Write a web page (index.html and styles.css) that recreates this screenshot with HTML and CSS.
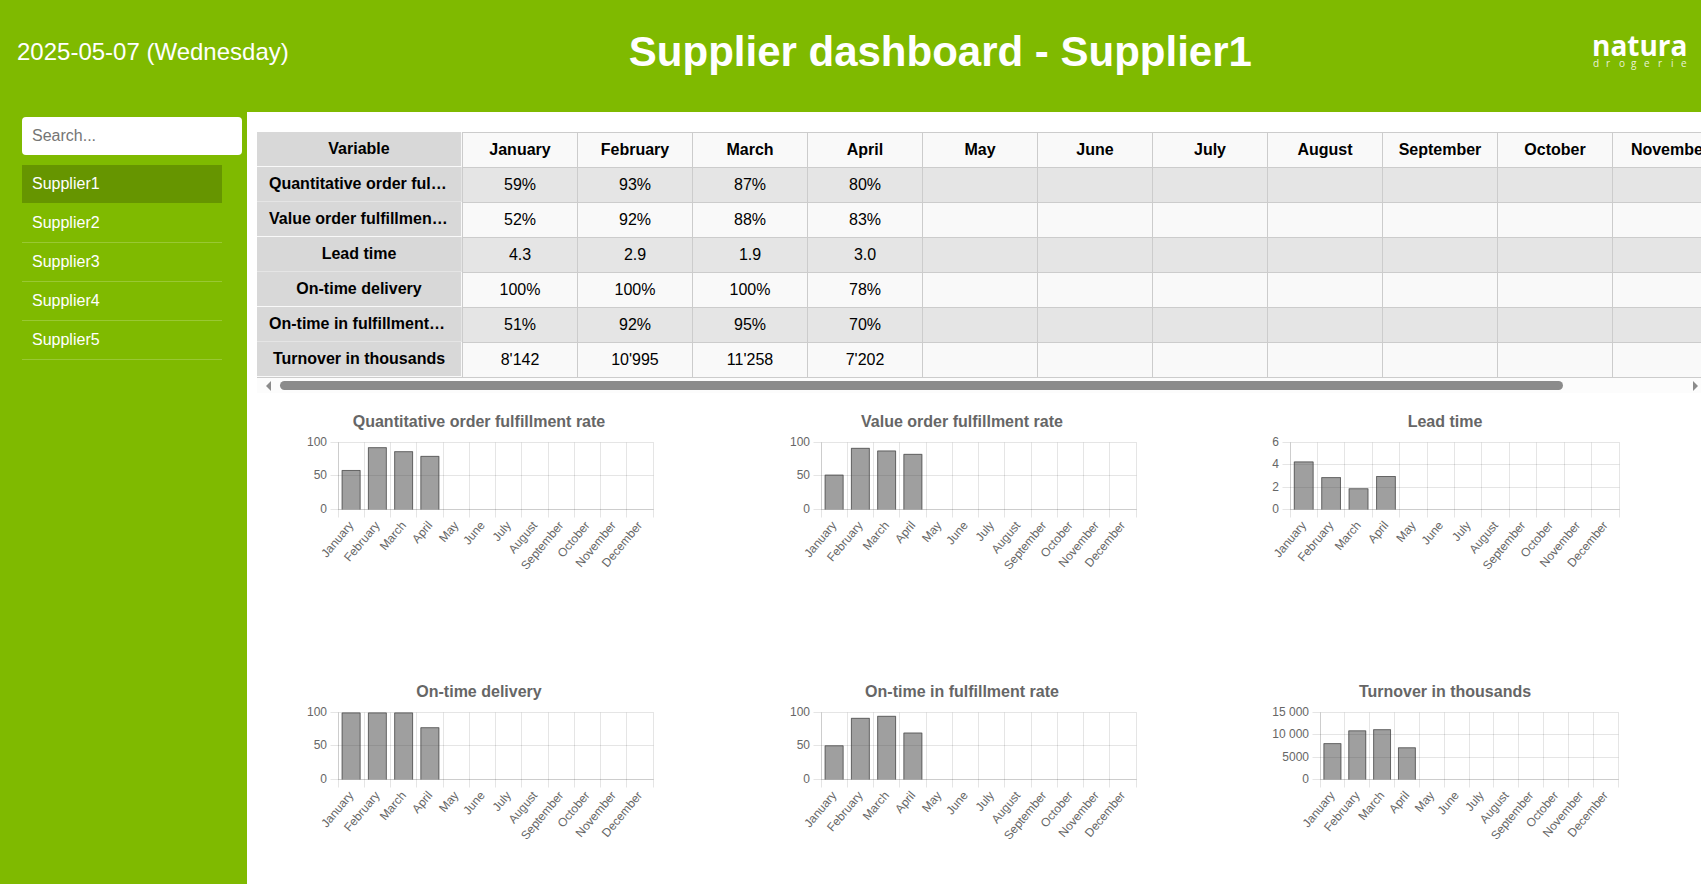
FILE: index.html
```html
<!DOCTYPE html>
<html lang="en">
<head>
<meta charset="utf-8">
<title>Supplier dashboard</title>
<link rel="stylesheet" href="styles.css">
</head>
<body>
<header class="header">
  <div class="date">2025-05-07 (Wednesday)</div>
  <h1 class="title">Supplier dashboard - Supplier1</h1>
  <svg class="logo" viewBox="0 0 96 36" role="img" aria-label="natura drogerie">
    <text class="logo-name" x="0" y="22">natura</text>
    <text class="logo-sub" x="1 14 27 39 52 66 79 89" y="33">drogerie</text>
  </svg>
</header>
<div class="layout">
  <nav class="sidebar">
    <input class="search" type="text" placeholder="Search..." aria-label="Search suppliers">
    <ul class="suppliers">
      <li><a class="supplier active" href="#s1">Supplier1</a></li>
      <li><a class="supplier" href="#s2">Supplier2</a></li>
      <li><a class="supplier" href="#s3">Supplier3</a></li>
      <li><a class="supplier" href="#s4">Supplier4</a></li>
      <li><a class="supplier" href="#s5">Supplier5</a></li>
    </ul>
  </nav>
  <main class="main">
    <section class="table-wrap">
      <div class="table-clip"><table class="table"><thead id="thead"></thead><tbody id="tbody"></tbody></table></div>
      <div class="scrollbar">
        <svg class="arrow" viewBox="0 0 5 10"><path d="M5 0V10L0 5Z"/></svg>
        <div class="track"><div class="thumb"></div></div>
        <svg class="arrow" viewBox="0 0 5 10"><path d="M0 0V10L5 5Z"/></svg>
      </div>
    </section>
    <section class="charts" id="charts"></section>
  </main>
</div>
<script src="script.js"></script>
</body>
</html>
```
FILE: styles.css
```css
* { box-sizing: border-box; }
body {
  margin: 0;
  min-height: 100vh;
  display: flex;
  flex-direction: column;
  font-family: "Liberation Sans", Arial, sans-serif;
  font-size: 16px;
  background: #fff;
  color: #000;
}
.header {
  display: flex;
  align-items: center;
  justify-content: space-between;
  min-height: 112px;
  padding: 0 13px 8px 17px;
  background: #7fba00;
  color: #fff;
}
.date { font-size: 24px; }
.title { margin: 0; font-size: 42px; }
.logo { width: 96px; height: 36px; overflow: visible; fill: #fff; }
.logo-name { font: 700 28px "Open Sans", sans-serif; }
.logo-sub { font: 10px "Open Sans", sans-serif; fill-opacity: .85; }
.layout { flex: 1; display: flex; }
.sidebar {
  flex: 0 0 247px;
  padding: 5px 5px 0 22px;
  background: #7fba00;
}
.search {
  display: block;
  width: 100%;
  height: 38px;
  padding: 0 10px;
  border: 0;
  border-radius: 4px;
  background: #fff;
  font: inherit;
}
.search::placeholder { color: #757575; }
.suppliers { list-style: none; margin: 10px 20px 0 0; padding: 0; }
.supplier {
  display: block;
  padding: 10px;
  line-height: 18px;
  border-bottom: 1px solid #99c833;
  color: #fff;
  text-decoration: none;
}
.supplier.active { background: #669500; background-clip: padding-box; border-color: transparent; }
.main { flex: 1; min-width: 0; padding-top: 20px; }
.table-wrap { margin-left: 10px; }
.table-clip { overflow: hidden; }
.table {
  width: 1585px;
  table-layout: fixed;
  border-collapse: separate;
  border-spacing: 0;
  border-bottom: 1px solid #ccc;
  text-align: center;
}
.table th, .table td {
  width: 115px;
  height: 35px;
  padding: 0;
  border-left: 1px solid #ccc;
  border-top: 1px solid #ccc;
}
.table tr { background: #f9f9f9; }
.table tr.alt { background: #e5e5e5; }
.table .label {
  width: 205px;
  padding: 0 12px;
  border: 0 solid #f9f9f9;
  border-width: 0 1px 1px 0;
  background: #d8d8d8;
  overflow: hidden;
  text-overflow: ellipsis;
  white-space: nowrap;
}
.table .alt .label { border-color: #e5e5e5; }
.scrollbar {
  display: flex;
  align-items: center;
  gap: 9px;
  height: 15px;
  padding: 0 3px 0 9px;
  background: #fcfcfc;
}
.arrow { width: 5px; height: 10px; fill: #8b8b8b; }
.track { flex: 1; }
.thumb { width: 91.4%; height: 9px; border-radius: 5px; background: #8b8b8b; }
.charts {
  display: grid;
  grid-template-columns: repeat(3, 1fr);
  gap: 90px 20px;
  justify-items: center;
  padding: 11px 25px 0 0;
}
.chart { width: 351px; height: 180px; overflow: visible; }
.chart-title { font-size: 16px; font-weight: bold; fill: #666; text-anchor: middle; }
.tick { font-size: 12px; fill: #666; text-anchor: end; }
.grid { stroke: #000; stroke-opacity: .1; fill: none; }
.bar { fill: #404040; fill-opacity: .5; }
.bar-edge { fill: none; stroke: #404040; stroke-opacity: .6; }
```
FILE: script.js
```js
const months = ['January', 'February', 'March', 'April', 'May', 'June', 'July',
  'August', 'September', 'October', 'November', 'December'];

const rows = [
  ['Quantitative order fulfillment rate', ['59%', '93%', '87%', '80%']],
  ['Value order fulfillment rate', ['52%', '92%', '88%', '83%']],
  ['Lead time', ['4.3', '2.9', '1.9', '3.0']],
  ['On-time delivery', ['100%', '100%', '100%', '78%']],
  ['On-time in fulfillment rate', ['51%', '92%', '95%', '70%']],
  ['Turnover in thousands', ["8'142", "10'995", "11'258", "7'202"]]
];

document.getElementById('thead').innerHTML =
  '<tr><th class="label" scope="col">Variable</th>' +
  months.map(m => `<th scope="col">${m}</th>`).join('') + '</tr>';

document.getElementById('tbody').innerHTML = rows.map(([name, values], i) =>
  `<tr class="${i % 2 ? '' : 'alt'}"><th class="label" scope="row">${name}</th>` +
  months.map((m, k) => `<td>${values[k] || ''}</td>`).join('') + '</tr>').join('');

// Axis ticks run from bottom to top; left and right are the plot's edges.
const percent = ['0', '50', '100'];
const axes = [
  { ticks: percent, max: 100, left: 35, right: 350 },
  { ticks: percent, max: 100, left: 35, right: 350 },
  { ticks: ['0', '2', '4', '6'], max: 6, left: 21, right: 350 },
  { ticks: percent, max: 100, left: 35, right: 350 },
  { ticks: percent, max: 100, left: 35, right: 350 },
  { ticks: ['0', '5000', '10 000', '15 000'], max: 15000, left: 51, right: 349 }
];

const TOP = 38.5, BOTTOM = 105.5;
const snapX = v => Math.floor(v) + 0.5;
const snapY = v => Math.ceil(v) - 0.5;

function chart([name, values], { ticks, max, left, right }) {
  const step = (right - left) / 12;
  const x0 = snapX(left), x1 = snapX(right);
  let out = `<text class="chart-title" x="176" y="23">${name}</text>`;
  ticks.forEach((t, i) => {
    const y = snapY(BOTTOM - i * (BOTTOM - TOP) / (ticks.length - 1));
    out += `<path class="grid" d="M${x0 - 8} ${y}H${x1}"/>` +
      `<text class="tick" x="${left - 11}" y="${y + 3.5}">${t}</text>`;
  });
  for (let i = 0; i <= 12; i++) {
    out += `<path class="grid" d="M${snapX(left + i * step)} ${TOP}V${BOTTOM + 8}"/>`;
  }
  out += `<path class="grid" d="M${x0} ${TOP}V${BOTTOM}H${x1}"/>`;
  values.forEach((v, i) => {
    const h = parseFloat(v.replace("'", '')) / max * (BOTTOM - TOP);
    const w = step * 0.72, x = left + step * (i + 0.5) - w / 2, y = BOTTOM - h;
    out += `<rect class="bar" x="${x}" y="${y}" width="${w}" height="${h}"/>` +
      `<path class="bar-edge" d="M${x + 0.5} ${BOTTOM}V${y + 0.5}H${x + w - 0.5}V${BOTTOM}"/>`;
  });
  months.forEach((m, i) => {
    const x = left + step * (i + 0.5);
    out += `<text class="tick" transform="translate(${x} 119) rotate(-50)" y="4">${m}</text>`;
  });
  return `<svg class="chart" viewBox="0 0 351 180" role="img" aria-label="${name}">${out}</svg>`;
}

document.getElementById('charts').innerHTML = rows.map((r, i) => chart(r, axes[i])).join('');
```
